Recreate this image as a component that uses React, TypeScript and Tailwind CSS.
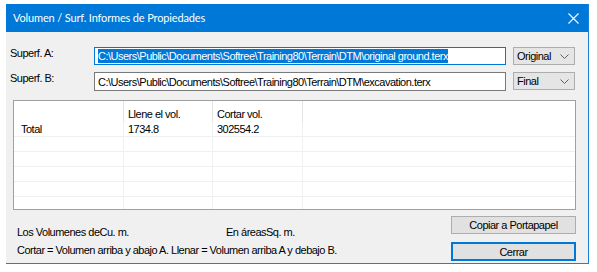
const cols = ["w-[110px]", "w-[89px]", "w-[90px]"];

function Chevron() {
  return (
    <svg width="9" height="5" viewBox="0 0 9 5" className="text-[#606060]">
      <path d="M0.5 0.5 L4.5 4.5 L8.5 0.5" fill="none" stroke="currentColor" strokeWidth="1" />
    </svg>
  );
}

function Combo({ label }: { label: string }) {
  return (
    <div className="flex h-[18px] w-[62px] items-center justify-between border border-[#adadad] bg-[#e5e5e5] pl-[3px] pr-[5px]">
      <span>{label}</span>
      <Chevron />
    </div>
  );
}

function Row({ cells }: { cells: string[] }) {
  return (
    <div className="flex h-[15px] shrink-0 border-b border-[#f0f0f0]">
      <div className={`${cols[0]} border-r border-[#f0f0f0] pl-[7px] leading-[14px]`}>{cells[0]}</div>
      <div className={`${cols[1]} border-r border-[#f0f0f0] pl-[4px] leading-[14px]`}>{cells[1]}</div>
      <div className={`${cols[2]} border-r border-[#f0f0f0] pl-[4px] leading-[14px]`}>{cells[2]}</div>
      <div className="flex-1" />
    </div>
  );
}

export default function App() {
  const rows = [
    ["Total", "1734.8", "302554.2"],
    ["", "", ""],
    ["", "", ""],
    ["", "", ""],
    ["", "", ""],
    ["", "", ""],
  ];

  return (
    <div className="h-[272px] w-[597px] bg-white pl-[6px] pt-[4px] font-['Liberation_Sans',Arial,sans-serif] text-[11px] tracking-[-0.5px] text-black">
      <div className="flex h-[260px] w-[583px] flex-col border-r border-b border-[#1883d7] bg-[#f0f0f0]">
        {/* title bar */}
        <div className="flex h-[28px] shrink-0 items-center justify-between bg-[#0078d7] pl-[7px] pr-[7px] text-white">
          <span className="font-['Lato',sans-serif] text-[11px] tracking-[-0.15px]">Volumen / Surf. Informes de Propiedades</span>
          <svg width="11" height="11" viewBox="0 0 11 11" className="mr-[2px]">
            <path d="M0.5 0.5 L10.5 10.5 M10.5 0.5 L0.5 10.5" stroke="white" strokeWidth="1.1" />
          </svg>
        </div>

        <div className="flex flex-1 flex-col pl-[4px] pr-[12px]">
          {/* Superf. A */}
          <div className="mt-[15px] flex h-[18px] items-start">
            <span className="w-[84px] leading-[13px]">Superf. A:</span>
            <div className="flex h-[18px] w-[412px] items-center border border-[#0078d7] bg-white pl-[3px]">
              <span className="bg-[#0078d7] leading-[14px] text-white">
                C:\Users\Public\Documents\Softree\Training80\Terrain\DTM\original ground.terx
              </span>
            </div>
            <div className="ml-[7px]">
              <Combo label="Original" />
            </div>
          </div>

          {/* Superf. B */}
          <div className="mt-[7px] flex h-[19px] items-start">
            <span className="w-[84px] leading-[13px]">Superf. B:</span>
            <div className="flex h-[19px] w-[412px] items-center border border-[#7a7a7a] bg-white pl-[3px]">
              <span className="leading-[14px]">C:\Users\Public\Documents\Softree\Training80\Terrain\DTM\excavation.terx</span>
            </div>
            <div className="ml-[7px]">
              <Combo label="Final" />
            </div>
          </div>

          {/* table */}
          <div className="ml-[3px] mt-[9px] flex h-[110px] flex-col overflow-hidden border border-[#a0a0a0] bg-white">
            <div className="flex h-[21px] shrink-0">
              <div className={`${cols[0]} border-r border-[#e5e5e5]`} />
              <div className={`${cols[1]} border-r border-[#e5e5e5] pl-[4px] pt-[5px]`}>Llene el vol.</div>
              <div className={`${cols[2]} border-r border-[#e5e5e5] pl-[4px] pt-[5px]`}>Cortar vol.</div>
              <div className="flex-1" />
            </div>
            {rows.map((r, i) => (
              <Row key={i} cells={r} />
            ))}
          </div>

          {/* bottom */}
          <div className="mt-[6px] flex">
            <div className="flex flex-1 flex-col pl-[7px]">
              <div className="mt-[8px] flex">
                <span className="w-[209px]">Los Volumenes deCu. m.</span>
                <span>En áreasSq. m.</span>
              </div>
              <div className="mt-[1px]">
                Cortar = Volumen arriba y abajo A. Llenar = Volumen arriba A y debajo B.
              </div>
            </div>
            <div className="flex w-[125px] flex-col gap-[8px]">
              <button className="h-[18px] border border-[#adadad] bg-[#e1e1e1]">Copiar a Portapapel</button>
              <button className="h-[19px] border-2 border-[#0078d7] bg-[#e1e1e1]">Cerrar</button>
            </div>
          </div>
        </div>
      </div>
    </div>
  );
}
